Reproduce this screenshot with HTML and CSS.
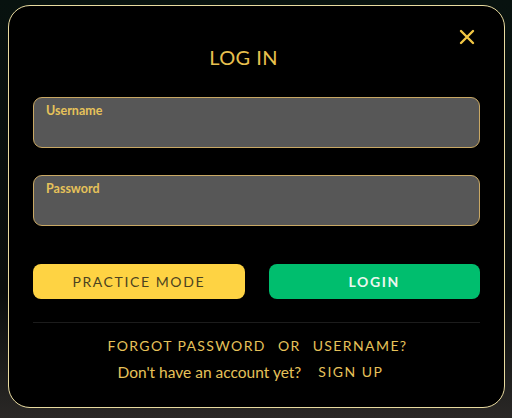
FILE: index.html
```html
<!DOCTYPE html>
<html>
<head>
<meta charset="utf-8">
<link rel="stylesheet" href="styles.css">
</head>
<body>
<div class="backdrop">
  <div class="modal">
    <div class="header">
      <h1 class="title">LOG IN</h1>
      <button class="close" aria-label="Close">
        <svg width="16" height="16" viewBox="0 0 16 16"><path d="M2 2 L14 14 M14 2 L2 14" stroke="#f2c744" stroke-width="2.4" stroke-linecap="round"/></svg>
      </button>
    </div>
    <div class="field">
      <label class="label">Username</label>
    </div>
    <div class="field">
      <label class="label">Password</label>
    </div>
    <div class="buttons">
      <button class="btn btn-practice">PRACTICE MODE</button>
      <button class="btn btn-login">LOGIN</button>
    </div>
    <div class="divider"></div>
    <div class="links">
      <div class="forgot"><span>FORGOT PASSWORD</span><span>OR</span><span>USERNAME?</span></div>
      <div class="signup"><span class="q">Don't have an account yet?</span><span class="su">SIGN UP</span></div>
    </div>
  </div>
</div>
</body>
</html>
```

FILE: styles.css
```css
html, body {
  margin: 0;
  padding: 0;
}
body {
  width: 512px;
  height: 418px;
  background: linear-gradient(180deg, #08120f 0%, #0a0d0c 70%, #2a2826 100%);
  font-family: Lato, "Open Sans", sans-serif;
  overflow: hidden;
}
.backdrop {
  padding: 5px 7px 0 8px;
}
.modal {
  box-sizing: border-box;
  width: 497px;
  height: 403px;
  background: #000;
  border: 1.5px solid #e9dba0;
  border-radius: 22px;
  padding: 0 24px 0 24px;
  display: flex;
  flex-direction: column;
}
.header {
  display: flex;
  align-items: flex-start;
  height: 91px;
}
.title {
  flex: 1;
  margin: 39px 0 0 0;
  text-align: center;
  color: #e8c04f;
  font-size: 20px;
  font-weight: 400;
  letter-spacing: 0.4px;
}
.close {
  width: 26px;
  height: 26px;
  margin-top: 18px;
  background: none;
  border: none;
  padding: 0;
  display: flex;
  align-items: center;
  justify-content: center;
}
.field {
  box-sizing: border-box;
  height: 51px;
  background: #575757;
  border: 1.5px solid #c9a864;
  border-radius: 9px;
  padding: 1px 12px;
  margin-bottom: 27px;
}
.label {
  color: #e6c25a;
  font-size: 12.5px;
  font-weight: 700;
}
.buttons {
  display: flex;
  gap: 24px;
  margin-top: 11px;
}
.btn {
  flex: 1;
  height: 35px;
  border: none;
  border-radius: 8px;
  font-family: Lato, "Open Sans", sans-serif;
  font-size: 14px;
  letter-spacing: 1.6px;
}
.btn-practice {
  background: #fed343;
  color: #4b4220;
}
.btn-login {
  background: #00be6e;
  color: #eaf7ef;
  font-weight: 700;
}
.divider {
  height: 1px;
  background: #1c1c1c;
  margin-top: 23px;
}
.links {
  color: #e6c25a;
  text-align: center;
}
.forgot {
  margin-top: 14px;
  font-size: 14px;
  letter-spacing: 1.4px;
  display: flex;
  justify-content: center;
  gap: 12px;
  padding-left: 2px;
}
.signup {
  margin-top: 9px;
  font-size: 15.5px;
  display: flex;
  justify-content: center;
  gap: 17px;
  padding-right: 12px;
}
.su {
  font-size: 14px;
  letter-spacing: 1.5px;
}
```
